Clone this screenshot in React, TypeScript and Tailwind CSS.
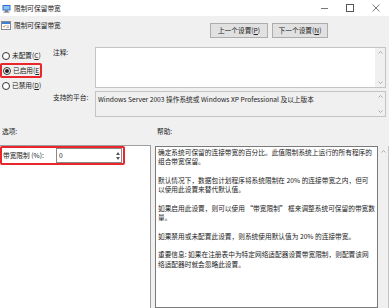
import React from 'react';

const font = "font-['Noto_Sans_CJK_SC','Noto_Sans',sans-serif]";

const helpParagraphs: string[][] = [
  ['确定系统可保留的连接带宽的百分比。此值限制系统上运行的所有程序的', '组合带宽保留。'],
  ['默认情况下，数据包计划程序将系统限制在 20% 的连接带宽之内，但可', '以使用此设置来替代默认值。'],
  ['如果启用此设置，则可以使用 “带宽限制” 框来调整系统可保留的带宽数', '量。'],
  ['如果禁用或未配置此设置，则系统使用默认值为 20% 的连接带宽。'],
  ['重要信息: 如果在注册表中为特定网络适配器设置带宽限制，则配置该网', '络适配器时就会忽略此设置。'],
];

function ArrowUp() {
  return (
    <svg width="5" height="3" viewBox="0 0 5 3">
      <path d="M0.5 2.5 L2.5 0.5 L4.5 2.5" fill="none" stroke="#a6a6a6" strokeWidth="0.9" />
    </svg>
  );
}

function ArrowDown() {
  return (
    <svg width="5" height="3" viewBox="0 0 5 3">
      <path d="M0.5 0.5 L2.5 2.5 L4.5 0.5" fill="none" stroke="#a6a6a6" strokeWidth="0.9" />
    </svg>
  );
}

function Radio({ checked, label, letter, boxed }: { checked?: boolean; label: string; letter: string; boxed?: boolean }) {
  return (
    <div
      className={`h-[15px] flex items-center gap-[2px] pl-[1px] overflow-hidden whitespace-nowrap ${
        boxed ? 'w-[42px] border-2 border-[#e8262b] rounded-[2px] -ml-[1px]' : 'w-[50px]'
      }`}
    >
      <div className="w-[8px] h-[8px] rounded-full border border-[#333] bg-white flex items-center justify-center shrink-0">
        {checked && <div className="w-[4px] h-[4px] rounded-full bg-[#222]" />}
      </div>
      <span>
        {label}(<span className="underline">{letter}</span>)
      </span>
    </div>
  );
}

export default function App() {
  return (
    <div className={`w-[389px] h-[308px] overflow-hidden bg-[#f0f0f0] text-[#222] text-[6.7px] leading-[9px] flex flex-col ${font}`}>
      {/* title bar */}
      <div className="h-[16px] bg-white flex items-center shrink-0">
        <svg className="ml-[2px]" width="9" height="9" viewBox="0 0 9 9">
          <rect x="0.5" y="1" width="8" height="5.5" fill="#2a6fd1" />
          <rect x="1.5" y="2" width="6" height="3.5" fill="#8fc2f2" />
          <rect x="3" y="6.5" width="3" height="1.2" fill="#555" />
          <rect x="1.5" y="7.6" width="6" height="1" fill="#777" />
        </svg>
        <span className="ml-[3px]">限制可保留带宽</span>
        <div className="ml-auto flex items-center h-full">
          <div className="w-[26px] flex justify-center">
            <div className="w-[7px] h-px bg-[#777]" />
          </div>
          <div className="w-[26px] flex justify-center">
            <div className="w-[8px] h-[8px] border border-[#555]" />
          </div>
          <div className="w-[26px] flex justify-center">
            <svg width="8" height="8" viewBox="0 0 8 8">
              <path d="M0.5 0.5 L7.5 7.5 M7.5 0.5 L0.5 7.5" stroke="#555" strokeWidth="0.8" />
            </svg>
          </div>
        </div>
      </div>

      {/* header row */}
      <div className="h-[22px] flex items-start shrink-0">
        <div className="flex items-center mt-[5px] ml-[1px]">
          <svg width="10" height="9" viewBox="0 0 10 9">
            <rect x="0.5" y="0.5" width="9" height="8" fill="#fff" stroke="#8a8a8a" />
            <rect x="1" y="1" width="8" height="2" fill="#3b7fd6" />
            <path d="M2 5 L3 6.2 L4.5 4.2" fill="none" stroke="#d9822b" strokeWidth="0.9" />
            <rect x="5.5" y="4.5" width="2.5" height="0.8" fill="#999" />
            <rect x="5.5" y="6.3" width="2.5" height="0.8" fill="#999" />
          </svg>
          <span className="ml-[3px]">限制可保留带宽</span>
        </div>
        <div className="ml-auto mr-[61px] mt-[7px] flex gap-[4px]">
          <div className="w-[58px] h-[15px] bg-[#e1e1e1] border border-[#adadad] flex items-center justify-center">
            上一个设置(<span className="underline">P</span>)
          </div>
          <div className="w-[56px] h-[15px] bg-[#e1e1e1] border border-[#adadad] flex items-center justify-center">
            下一个设置(<span className="underline">N</span>)
          </div>
        </div>
      </div>

      {/* state + comment + platform */}
      <div className="flex mt-[9px] shrink-0">
        <div className="w-[50px] pt-[1px] pl-[1px]">
          <Radio label="未配置" letter="C" />
          <Radio label="已启用" letter="E" checked boxed />
          <Radio label="已禁用" letter="D" />
        </div>
        <div className="flex flex-col gap-[3px]">
          <div className="flex">
            <div className="w-[45px] pl-[3px] pt-[1px]">注释:</div>
            <div className="w-[291px] h-[41px] bg-white border border-[#c4c4c4] flex">
              <div className="flex-1" />
              <div className="w-[10px] bg-[#f0f0f0] flex flex-col items-center justify-between py-[3px]">
                <ArrowUp />
                <ArrowDown />
              </div>
            </div>
          </div>
          <div className="flex">
            <div className="w-[45px] pl-[3px] pt-[2px]">支持的平台:</div>
            <div className="w-[291px] h-[26px] bg-[#f0f0f0] border border-[#c4c4c4] flex">
              <div className="flex-1 pl-[2px] pt-[3px] whitespace-nowrap">
                Windows Server 2003 操作系统或 Windows XP Professional 及以上版本
              </div>
              <div className="w-[10px] flex flex-col items-center justify-between py-[3px]">
                <ArrowUp />
                <ArrowDown />
              </div>
            </div>
          </div>
        </div>
      </div>

      {/* section labels */}
      <div className="h-[28px] flex items-center shrink-0">
        <div className="w-[157px] pl-[2px]">选项:</div>
        <div>帮助:</div>
      </div>

      {/* panes */}
      <div className="flex flex-1 min-h-0">
        <div className="w-[151px] bg-white border-r border-t border-[#a0a0a0] pt-[0px]">
          <div className="w-[125px] h-[19px] border-2 border-[#e8262b] rounded-[2px] flex items-center">
            <span className="w-[54px] pl-[1px] whitespace-nowrap">带宽限制 (%):</span>
            <div className="w-[66px] h-[15px] bg-white border border-[#8a8a8a] flex">
              <div className="flex-1 pl-[2px] flex items-center">0</div>
              <div className="w-[6px] flex flex-col items-center justify-center gap-[2px]">
                <svg width="4" height="3" viewBox="0 0 4 3">
                  <path d="M0 3 L2 0 L4 3 Z" fill="#555" />
                </svg>
                <svg width="4" height="3" viewBox="0 0 4 3">
                  <path d="M0 0 L2 3 L4 0 Z" fill="#555" />
                </svg>
              </div>
            </div>
          </div>
        </div>
        <div className="ml-[4px] flex flex-1 pt-[1px]">
          <div className="w-[223px] bg-white border border-[#7a7a7a] pl-[2px] pt-[1px] whitespace-nowrap">
            {helpParagraphs.map((p, i) => (
              <div key={i} className={i > 0 ? 'mt-[9.5px]' : ''}>
                {p.map((line, j) => (
                  <div key={j} className="leading-[9.2px]">{line}</div>
                ))}
              </div>
            ))}
          </div>
          <div className="flex-1 flex flex-col items-center pt-[4px] border-r border-[#c4c4c4]">
            <ArrowUp />
          </div>
        </div>
      </div>
    </div>
  );
}
